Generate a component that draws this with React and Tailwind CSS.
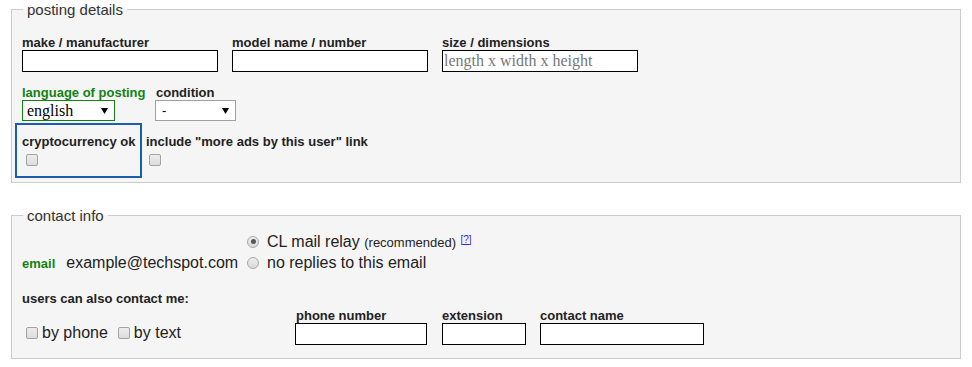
import React from "react";

const font = { fontFamily: '"Liberation Sans", Arial, sans-serif' };

function Checkbox({ className = "" }) {
  return (
    <span
      className={
        "inline-block w-[12px] h-[12px] rounded-[2px] border border-[#a3a3a3] bg-gradient-to-b from-[#ededed] to-[#dcdcdc] " +
        className
      }
    />
  );
}

function Radio({ checked }) {
  return (
    <span className="flex items-center justify-center w-[12px] h-[12px] rounded-full border border-[#a9a9a9] bg-gradient-to-b from-[#ededed] to-[#d9d9d9]">
      {checked && <span className="w-[5px] h-[5px] rounded-full bg-[#555]" />}
    </span>
  );
}

function Arrow() {
  return (
    <svg width="7" height="6" viewBox="0 0 7 6" className="block">
      <polygon points="0,0 7,0 3.5,6" fill="#000" />
    </svg>
  );
}

function Label({ children, className = "" }) {
  return (
    <div className={"text-[13px] leading-[15px] font-bold text-[#222] whitespace-nowrap " + className}>
      {children}
    </div>
  );
}

function TextInput({ w, placeholder }) {
  return (
    <div
      className="h-[22px] border border-black bg-white flex items-center px-[1px] text-[16px] text-[#777]"
      style={{ width: w, fontFamily: '"Liberation Serif", "Times New Roman", serif' }}
    >
      {placeholder}
    </div>
  );
}

export default function App() {
  return (
    <div className="w-[972px] h-[367px] bg-white text-[#222] overflow-hidden" style={font}>
      <fieldset className="mx-[11px] border border-[#cccccc] bg-[#f5f5f5] pl-[10px] pr-[10px] pb-[4px]">
        <legend className="ml-[1px] px-[4px] text-[15px] leading-[19px] text-[#333]">posting details</legend>
        <div className="mt-[16px] flex gap-[14px]">
          <div>
            <Label>make / manufacturer</Label>
            <TextInput w={196} />
          </div>
          <div>
            <Label>model name / number</Label>
            <TextInput w={196} />
          </div>
          <div>
            <Label>size / dimensions</Label>
            <TextInput w={196} placeholder="length x width x height" />
          </div>
        </div>

        <div className="mt-[13px] flex">
          <div className="w-[133px]">
            <Label className="text-[#128212]">language of posting</Label>
            <div className="w-[93px] h-[21px] border border-[#128212] bg-white flex items-center justify-between pl-[4px] pr-[6px]">
              <span
                className="text-[16px] leading-[18px] text-black"
                style={{ fontFamily: '"Liberation Serif", "Times New Roman", serif' }}
              >
                english
              </span>
              <Arrow />
            </div>
          </div>
          <div>
            <Label className="ml-[1px]">condition</Label>
            <div className="w-[81px] h-[21px] border border-[#a0a0a0] bg-white flex items-center justify-between pl-[6px] pr-[6px]">
              <span className="text-[13px] leading-[15px] text-black">-</span>
              <Arrow />
            </div>
          </div>
        </div>

        <div className="mt-[2px] flex items-start">
          <div className="-ml-[7px] w-[127px] h-[55px] border-2 border-[#1c5db0] pl-[5px] pt-[9px]">
            <Label>cryptocurrency ok</Label>
            <Checkbox className="ml-[4px] mt-[3px] block" />
          </div>
          <div className="ml-[4px] pt-[11px]">
            <Label>include "more ads by this user" link</Label>
            <Checkbox className="ml-[3px] mt-[3px] block" />
          </div>
        </div>
      </fieldset>

      <fieldset className="mx-[11px] mt-[23px] border border-[#cccccc] bg-[#f5f5f5] pl-[10px] pr-[10px] pb-[13px]">
        <legend className="ml-[1px] px-[4px] text-[15px] leading-[19px] text-[#333]">contact info</legend>
        <div className="mt-[6px] flex items-end">
          <div className="w-[214px] flex items-baseline h-[21px] leading-[21px]">
            <span className="text-[13px] font-bold text-[#128212]">email</span>
            <span className="ml-[11px] text-[16px] text-[#222]">example@techspot.com</span>
          </div>
          <div className="ml-[11px]">
            <div className="flex items-center h-[21px]">
              <Radio checked />
              <span className="ml-[8px] text-[16px] leading-[21px] text-[#222] whitespace-nowrap">
                CL mail relay <span className="text-[13px]">(recommended)</span>{" "}
                <sup className="text-[10px] text-[#3a1fd0] underline relative -top-[4px]">[?]</sup>
              </span>
            </div>
            <div className="flex items-center h-[21px]">
              <Radio />
              <span className="ml-[8px] text-[16px] leading-[21px] text-[#222] whitespace-nowrap">
                no replies to this email
              </span>
            </div>
          </div>
        </div>

        <Label className="mt-[18px]">users can also contact me:</Label>

        <div className="flex items-end">
          <div className="w-[273px] flex items-center h-[21px] mb-[2px] text-[16px] text-[#222]">
            <Checkbox className="ml-[4px]" />
            <span className="ml-[4px]">by phone</span>
            <Checkbox className="ml-[10px]" />
            <span className="ml-[4px]">by text</span>
          </div>
          <div className="flex gap-[14px] mt-[2px]">
            <div>
              <Label className="ml-[1px]">phone number</Label>
              <TextInput w={132} />
            </div>
            <div className="ml-[1px]">
              <Label>extension</Label>
              <TextInput w={84} />
            </div>
            <div>
              <Label>contact name</Label>
              <TextInput w={164} />
            </div>
          </div>
        </div>
      </fieldset>
    </div>
  );
}
